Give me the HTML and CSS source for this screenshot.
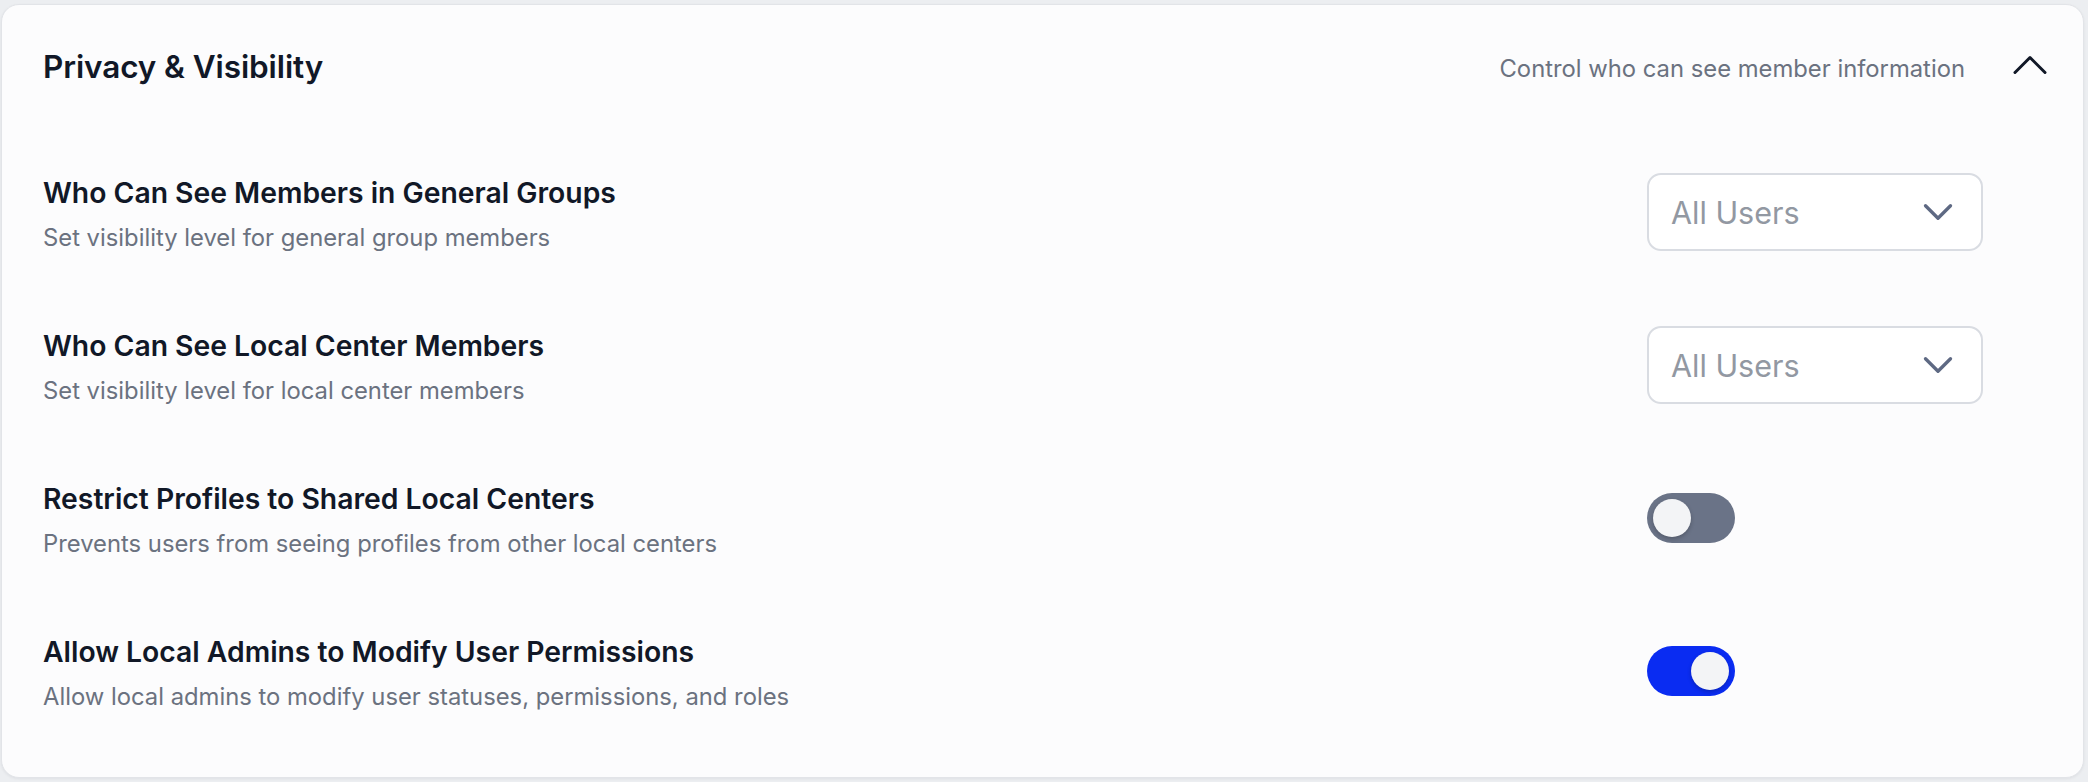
FILE: index.html
```html
<!DOCTYPE html>
<html lang="en">
<head>
<meta charset="utf-8">
<title>Privacy &amp; Visibility</title>
<link rel="stylesheet" href="styles.css">
</head>
<body>
  <section class="card">
    <header class="card-header">
      <h2 class="card-title">Privacy &amp; Visibility</h2>
      <div class="card-meta">
        <span class="card-hint">Control who can see member information</span>
        <button class="collapse-btn" aria-label="Collapse section">
          <svg viewBox="0 0 24 24" width="48" height="48" fill="none" stroke="currentColor" stroke-width="1.5" stroke-linecap="round" stroke-linejoin="round"><path d="m4.5 15.75 7.5-7.5 7.5 7.5"/></svg>
        </button>
      </div>
    </header>

    <div class="settings">
      <div class="setting">
        <div class="setting-text">
          <div class="setting-label">Who Can See Members in General Groups</div>
          <div class="setting-desc">Set visibility level for general group members</div>
        </div>
        <div class="setting-control">
          <div class="select">
            <span class="select-value">All Users</span>
            <svg class="select-caret" viewBox="0 0 24 24" width="40" height="40" fill="none" stroke="currentColor" stroke-width="2" stroke-linecap="round" stroke-linejoin="round"><path d="m19.5 8.25-7.5 7.5-7.5-7.5"/></svg>
          </div>
        </div>
      </div>

      <div class="setting">
        <div class="setting-text">
          <div class="setting-label">Who Can See Local Center Members</div>
          <div class="setting-desc">Set visibility level for local center members</div>
        </div>
        <div class="setting-control">
          <div class="select">
            <span class="select-value">All Users</span>
            <svg class="select-caret" viewBox="0 0 24 24" width="40" height="40" fill="none" stroke="currentColor" stroke-width="2" stroke-linecap="round" stroke-linejoin="round"><path d="m19.5 8.25-7.5 7.5-7.5-7.5"/></svg>
          </div>
        </div>
      </div>

      <div class="setting">
        <div class="setting-text">
          <div class="setting-label">Restrict Profiles to Shared Local Centers</div>
          <div class="setting-desc">Prevents users from seeing profiles from other local centers</div>
        </div>
        <div class="setting-control">
          <span class="toggle" role="switch" aria-checked="false"><span class="toggle-knob"></span></span>
        </div>
      </div>

      <div class="setting">
        <div class="setting-text">
          <div class="setting-label">Allow Local Admins to Modify User Permissions</div>
          <div class="setting-desc">Allow local admins to modify user statuses, permissions, and roles</div>
        </div>
        <div class="setting-control">
          <span class="toggle is-on" role="switch" aria-checked="true"><span class="toggle-knob"></span></span>
        </div>
      </div>
    </div>
  </section>
</body>
</html>
```

FILE: styles.css
```css
* {
  box-sizing: border-box;
}

html, body {
  margin: 0;
  background: #eceef1;
}

body {
  padding: 4px 4px 4px 1px;
  font-family: Inter, "Noto Sans", "Liberation Sans", sans-serif;
  -webkit-font-smoothing: antialiased;
}

.card {
  height: 774px;
  background: #fcfcfd;
  border: 1px solid #e2e4e8;
  border-radius: 18px;
  box-shadow: 0 1px 3px rgba(16, 24, 40, 0.06);
  display: flex;
  flex-direction: column;
}

/* header row: title on the left, hint + collapse chevron on the right */
.card-header {
  display: flex;
  align-items: center;
  justify-content: space-between;
  padding: 34px 29px 0 41px;
  height: 90px;
}

.card-title {
  margin: 0;
  font-size: 31.5px;
  line-height: 56px;
  font-weight: 600;
  color: #111827;
  letter-spacing: -0.1px;
}

.card-meta {
  display: flex;
  align-items: center;
  gap: 41px;
}

.card-hint {
  font-size: 23.8px;
  line-height: 40px;
  color: #6b7280;
  padding-top: 4px;
}

.collapse-btn {
  width: 48px;
  height: 48px;
  padding: 0;
  border: 0;
  background: none;
  color: #111827;
  display: flex;
  margin-top: -4px;
}

/* settings list */
.settings {
  padding: 43px 0 28px;
  display: flex;
  flex-direction: column;
}

.setting {
  display: grid;
  grid-template-columns: 1fr 336px;
  align-items: center;
  height: 153px;
  padding: 0 100px 0 41px;
}

.setting-label {
  font-size: 28.3px;
  line-height: 40px;
  font-weight: 600;
  color: #111827;
}

.setting-desc {
  margin-top: 7px;
  font-size: 23.8px;
  line-height: 36px;
  color: #6b7280;
}

.setting-control {
  display: flex;
  align-items: center;
  margin-bottom: 5px;
}

/* select box */
.select {
  width: 336px;
  height: 78px;
  background: #ffffff;
  border: 2px solid #d9dce2;
  border-radius: 14px;
  display: flex;
  align-items: center;
  justify-content: space-between;
  padding: 0 23px 0 22px;
}

.select-value {
  font-size: 30.5px;
  color: #9298a2;
}

.select-caret {
  color: #5e6983;
}

/* switch */
.toggle {
  width: 88px;
  height: 50px;
  border-radius: 25px;
  background: #6a7387;
  padding: 6px;
  display: flex;
  justify-content: flex-start;
}

.toggle.is-on {
  background: #0a2cf2;
  justify-content: flex-end;
}

.toggle-knob {
  width: 38px;
  height: 38px;
  border-radius: 50%;
  background: #f3f4f6;
  box-shadow: 0 2px 4px rgba(0, 0, 0, 0.22);
}
```
